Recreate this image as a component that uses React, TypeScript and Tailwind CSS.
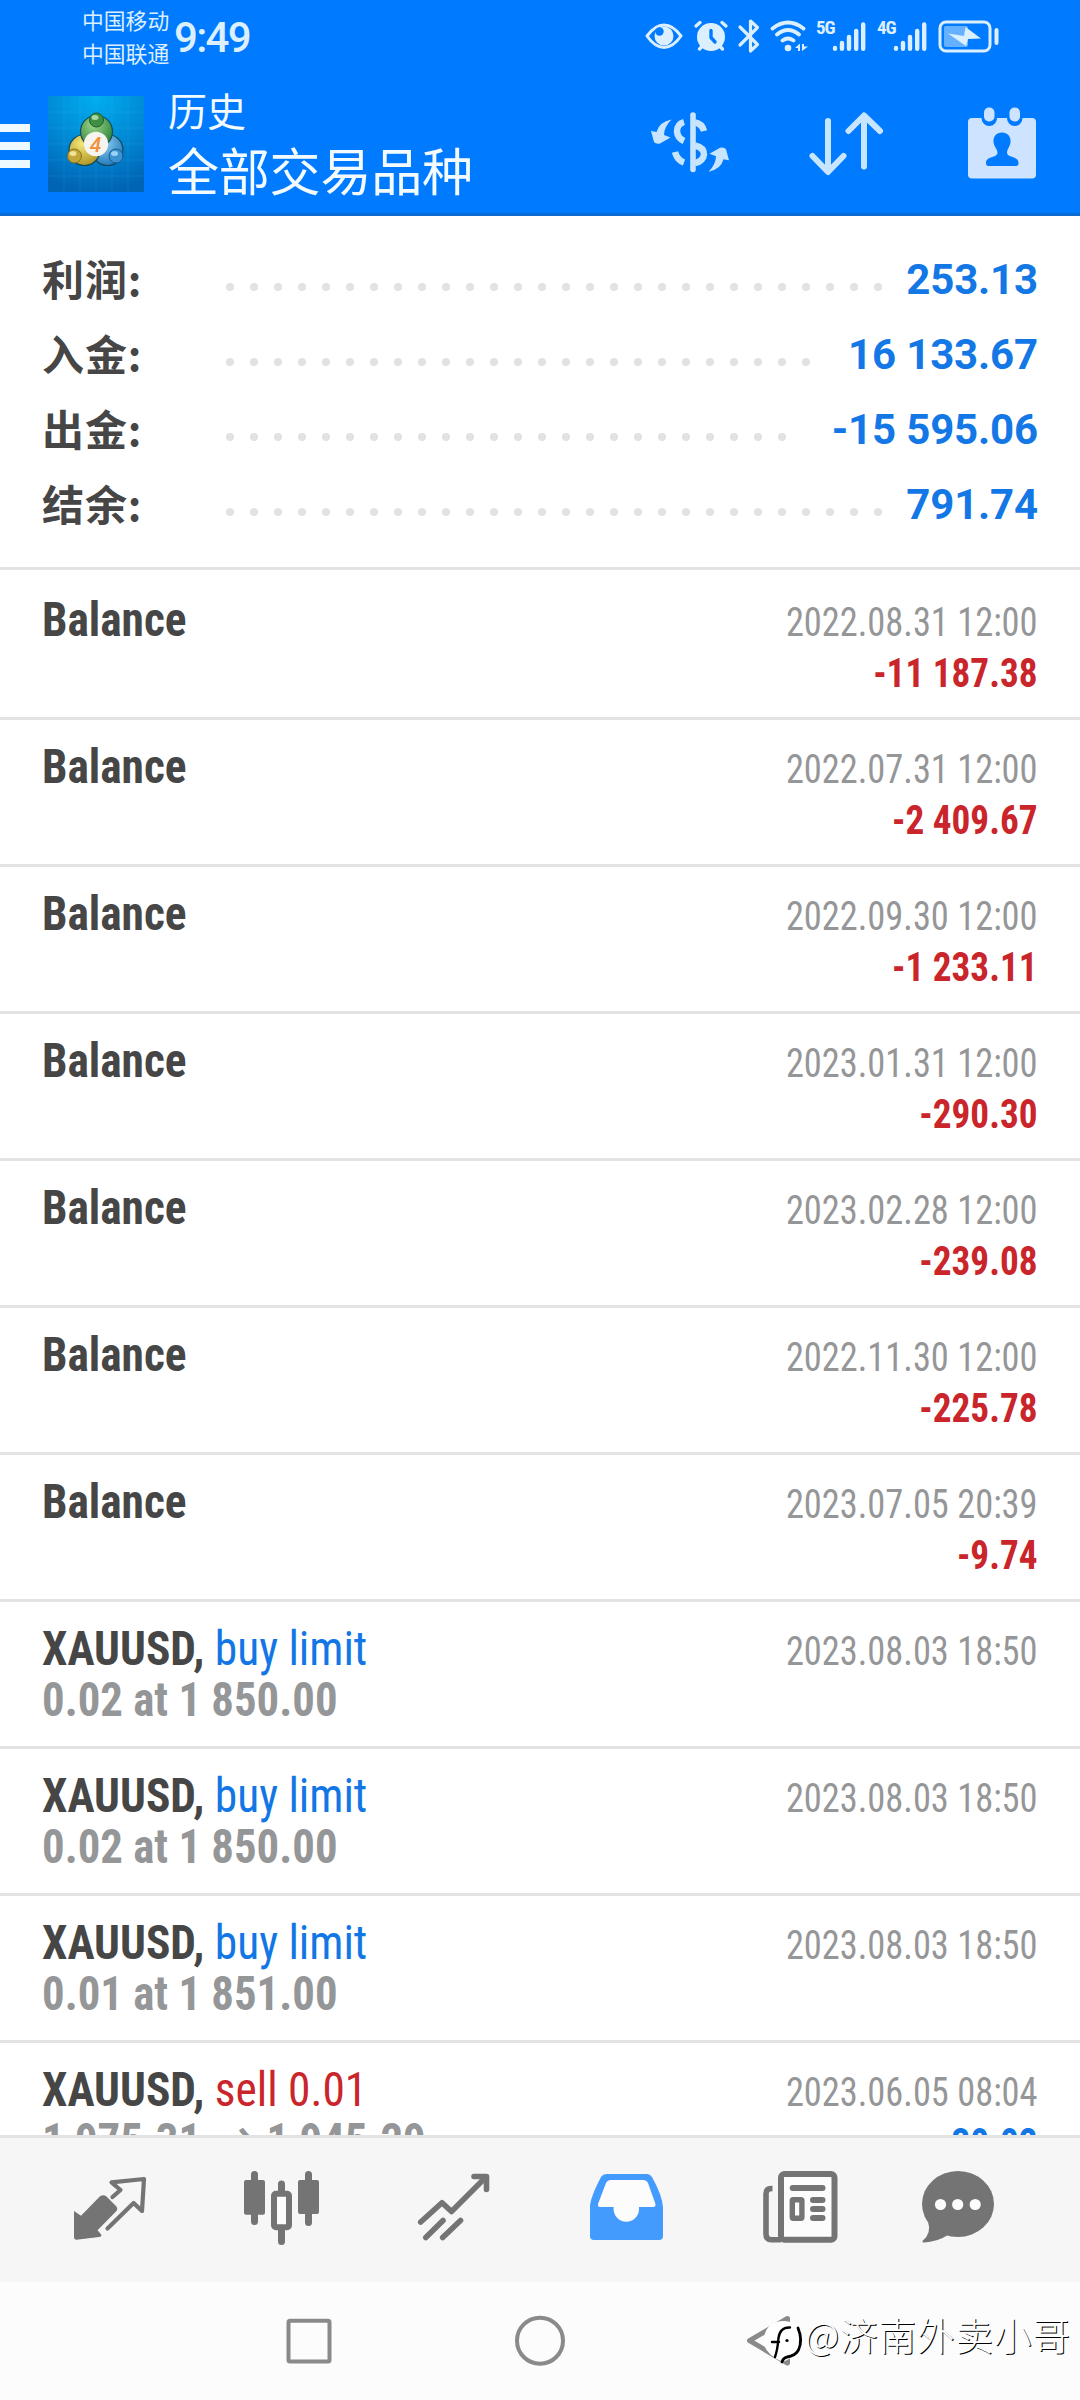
import type { ReactNode } from 'react';

type Row = {
  title: string;
  action?: string;
  detail?: string;
  date: string;
  amount?: string;
  tone?: 'red' | 'blue';
};

const summary = [
  { label: '利润:', value: '253.13', dots: 28 },
  { label: '入金:', value: '16 133.67', dots: 25 },
  { label: '出金:', value: '-15 595.06', dots: 24 },
  { label: '结余:', value: '791.74', dots: 28 },
];

const rows: Row[] = [
  { title: 'Balance', date: '2022.08.31 12:00', amount: '-11 187.38', tone: 'red' },
  { title: 'Balance', date: '2022.07.31 12:00', amount: '-2 409.67', tone: 'red' },
  { title: 'Balance', date: '2022.09.30 12:00', amount: '-1 233.11', tone: 'red' },
  { title: 'Balance', date: '2023.01.31 12:00', amount: '-290.30', tone: 'red' },
  { title: 'Balance', date: '2023.02.28 12:00', amount: '-239.08', tone: 'red' },
  { title: 'Balance', date: '2022.11.30 12:00', amount: '-225.78', tone: 'red' },
  { title: 'Balance', date: '2023.07.05 20:39', amount: '-9.74', tone: 'red' },
  { title: 'XAUUSD', action: 'buy limit', detail: '0.02 at 1 850.00', date: '2023.08.03 18:50', tone: 'blue' },
  { title: 'XAUUSD', action: 'buy limit', detail: '0.02 at 1 850.00', date: '2023.08.03 18:50', tone: 'blue' },
  { title: 'XAUUSD', action: 'buy limit', detail: '0.01 at 1 851.00', date: '2023.08.03 18:50', tone: 'blue' },
  { title: 'XAUUSD', action: 'sell 0.01', detail: '1 975.31 → 1 945.29', date: '2023.06.05 08:04', amount: '30.02', tone: 'blue' },
];

function Svg({ box, className, children }: { box: string; className: string; children: ReactNode }) {
  return (
    <svg viewBox={box} className={`shrink-0 ${className}`} fill="none" strokeLinecap="round" strokeLinejoin="round">
      {children}
    </svg>
  );
}

function SignalBars() {
  return (
    <g stroke="#dcefff" strokeWidth="4.4">
      <path d="M3 28.7V28M10 28.7V23M17 28.7V17M24.2 28.7V11M31.2 28.7V4.5" />
    </g>
  );
}

function StatusBar() {
  return (
    <div className="flex h-[72px] text-[#dcefff]">
      <div className="ml-[82px] flex w-[92px] flex-col pt-[3px] text-[21.8px] leading-[33px] whitespace-nowrap">
        <span>中国移动</span>
        <span>中国联通</span>
      </div>
      <span className="w-[78px] pt-[13px] font-['Roboto',sans-serif] text-[42px] leading-[50px] font-medium tracking-[-1.7px]">
        9:49
      </span>
      <div className="ml-[389px] flex pt-[16px]">
        {/* 护眼 */}
        <Svg box="641 16 46 40" className="h-10 w-[46px]">
          <path d="M647 36Q655 25 664 25Q673 25 681 36Q673 47.5 664 47.5Q655 47.5 647 36Z" stroke="currentColor" strokeWidth="3" />
          <circle cx="664" cy="36" r="9.5" fill="currentColor" />
          <circle cx="659.5" cy="31.5" r="4.2" fill="#007aff" />
        </Svg>
        {/* 闹钟 */}
        <Svg box="687 16 48 40" className="h-10 w-12">
          <circle cx="711" cy="37" r="14" fill="currentColor" />
          <path d="M696 26L700 22.5M726 26L722 22.5M699.5 49L702 46.5M722.5 49L720 46.5" stroke="currentColor" strokeWidth="3.4" />
          <path d="M711 30.5V37.5L715 42" stroke="#007aff" strokeWidth="3.4" />
        </Svg>
        {/* 蓝牙 */}
        <Svg box="735 16 30 40" className="h-10 w-[30px]">
          <path d="M740 27L757.5 44.5L750.5 51V21L757.5 27.5L740 45" stroke="currentColor" strokeWidth="3.2" />
        </Svg>
        {/* WiFi */}
        <Svg box="765 16 48 40" className="h-10 w-12">
          <path d="M772.5 28.5Q788 16.5 803.5 28.5M777 34.5Q788 25.5 799 34.5M782.5 40.5Q788 36.5 793.5 40.5" stroke="currentColor" strokeWidth="3.8" />
          <circle cx="788" cy="48" r="3.3" fill="currentColor" />
          <path d="M795 48L800 43.5V51H798V48ZM802 51V44H804V46.5H808Z" fill="currentColor" />
        </Svg>
        <div className="flex w-[61px]">
          <span className="mt-[3px] ml-[3px] w-[16px] font-['Roboto_Condensed','Roboto',sans-serif] text-[19px] leading-[18px] font-bold tracking-[-1px] font-stretch-condensed">5G</span>
          <Svg box="0 0 34 36" className="mt-[4px] h-9 w-[34px]">
            <SignalBars />
          </Svg>
        </div>
        <div className="flex w-[61px]">
          <span className="mt-[3px] ml-[3px] w-[16px] font-['Roboto_Condensed','Roboto',sans-serif] text-[19px] leading-[18px] font-bold tracking-[-1px] font-stretch-condensed">4G</span>
          <Svg box="0 0 34 36" className="mt-[4px] h-9 w-[34px]">
            <SignalBars />
          </Svg>
        </div>
        {/* 电池 */}
        <Svg box="935 16 68 40" className="h-10 w-[68px]">
          <rect x="940" y="22" width="50" height="29" rx="6" stroke="currentColor" strokeWidth="3" />
          <rect x="944" y="26" width="24" height="21" rx="2" fill="#66b1ff" />
          <path d="M948 33.5L964 36L965.5 27L981 38.5L968 39L966 46Z" fill="currentColor" />
          <path d="M996.5 30V43" stroke="currentColor" strokeWidth="4" />
        </Svg>
      </div>
    </div>
  );
}

function AppLogo() {
  return (
    <Svg box="48 96 96 96" className="ml-[18px] h-24 w-24">
      <defs>
        <radialGradient id="sky" cx="0.5" cy="0" r="1">
          <stop offset="0" stopColor="#00aef0" />
          <stop offset="0.55" stopColor="#0088d4" />
          <stop offset="1" stopColor="#0064b4" />
        </radialGradient>
        <radialGradient id="green" cx="0.4" cy="0.3" r="0.8">
          <stop offset="0" stopColor="#9bd488" />
          <stop offset="1" stopColor="#1f7a32" />
        </radialGradient>
        <radialGradient id="gold" cx="0.4" cy="0.3" r="0.8">
          <stop offset="0" stopColor="#f3e678" />
          <stop offset="1" stopColor="#a98c1c" />
        </radialGradient>
        <radialGradient id="azure" cx="0.4" cy="0.3" r="0.8">
          <stop offset="0" stopColor="#8ccdf2" />
          <stop offset="1" stopColor="#1670b4" />
        </radialGradient>
      </defs>
      <rect x="48" y="96" width="96" height="96" fill="url(#sky)" />
      <path
        d="M64 96V192M80 96V192M96 96V192M112 96V192M128 96V192M48 112H144M48 128H144M48 144H144M48 160H144M48 176H144"
        stroke="#5cc4f0"
        strokeOpacity="0.12"
      />
      <g stroke="#17495c" strokeWidth="1.2">
        <circle cx="107.5" cy="150" r="15.5" fill="url(#azure)" />
        <circle cx="84.5" cy="150" r="15.5" fill="url(#gold)" />
        <circle cx="96.5" cy="131.5" r="16" fill="url(#green)" />
      </g>
      <circle cx="96.5" cy="120" r="7" fill="#3f8f45" stroke="#1d5f2a" />
      <circle cx="74.5" cy="156" r="7" fill="#c3a63a" stroke="#8a7218" />
      <circle cx="116" cy="156" r="7" fill="#3c93d2" stroke="#155a94" />
      <ellipse cx="95" cy="117.5" rx="3.5" ry="2.5" fill="#a8d8a0" />
      <ellipse cx="73" cy="153.5" rx="3.5" ry="2.5" fill="#f0e296" />
      <ellipse cx="114.500" cy="153.5" rx="3.5" ry="2.5" fill="#9cd2f4" />
      <circle cx="96" cy="144" r="12.2" fill="#f6f4ee" />
      <text x="95.5" y="151.5" textAnchor="middle" fill="#f0913c" fontFamily="Roboto, sans-serif" fontSize="21" fontStyle="italic" fontWeight="500">
        4
      </text>
    </Svg>
  );
}

function Header() {
  return (
    <header className="h-[216px] border-b-[3px] border-[#0c6bd2] bg-[#007aff]">
      <StatusBar />
      <div className="flex pt-[24px]">
        <div className="mt-[28px] flex w-[30px] flex-col gap-[10px]">
          <span className="h-2 bg-[#eef8ff]" />
          <span className="h-2 bg-[#eef8ff]" />
          <span className="h-2 bg-[#eef8ff]" />
        </div>
        <AppLogo />
        <div className="ml-[24px] w-[482px] text-[#f4fbff]">
          <div className="mt-[-12px] text-[39px] leading-[50px]">历史</div>
          <div className="mt-[5px] text-[51px] leading-[60px] tracking-[-0.2px]">全部交易品种</div>
        </div>
        <Svg box="650 96 80 96" className="h-24 w-20">
          <g stroke="#c8e5ff" strokeWidth="6.5" strokeLinecap="butt">
            <path d="M684 122Q677 124 677 131.5Q677.5 138 684 141" />
            <path d="M695 122.5Q702 123.5 704 131" />
            <path d="M675 152Q677 160 684 162.5" />
            <path d="M695 145.5Q704 147.5 704 154.5Q703 161.5 695 163" />
            <path d="M693 115V169.5" strokeWidth="5.6" strokeLinecap="round" />
          </g>
          <g fill="#c8e5ff">
            <path d="M671.5 119.5Q659 122 656.5 132L651 131L654 142Q656 144.5 660 143.5L670.5 137.5L664 135Q664 127 671.5 119.5Z" />
            <path d="M671.5 119.5Q659 122 656.5 132L651 131L654 142Q656 144.5 660 143.5L670.5 137.5L664 135Q664 127 671.5 119.5Z" transform="rotate(180 690 145.6)" />
          </g>
        </Svg>
        <Svg box="808 96 76 96" className="ml-[78px] h-24 w-[76px]">
          <path d="M828 121V171.5M812.5 156L828 172L843.5 156M864 166.5V116M848.5 131L864 115.5L880 131" stroke="#c8e5ff" strokeWidth="6" />
        </Svg>
        <Svg box="968 96 68 96" className="ml-[84px] h-24 w-[68px]">
          <rect x="968" y="118" width="68" height="60.5" rx="4" fill="#cde3ff" />
          <rect x="986.5" y="109" width="5.5" height="12" rx="2.7" stroke="#007aff" strokeWidth="10" />
          <rect x="1012" y="109" width="5.5" height="12" rx="2.7" stroke="#007aff" strokeWidth="10" />
          <rect x="984" y="107.5" width="10.5" height="14" rx="5" fill="#cde3ff" />
          <rect x="1009.5" y="107.5" width="10.5" height="14" rx="5" fill="#cde3ff" />
          <path
            d="M1002 132.5C1008 132.5 1011 137 1010.5 142C1010 147 1007 149 1007 153C1008 158 1018.5 156 1018.5 163Q1018.5 166 1016 166H988.5Q986 166 986 163C986 156 997 158 997.5 153C997.5 149 994 147 993.5 142C993 137 996 132.5 1002 132.5Z"
            fill="#007aff"
          />
        </Svg>
      </div>
    </header>
  );
}

function Summary() {
  return (
    <section className="flex h-[354px] flex-col border-b-[3px] border-[#e3e3e3] pt-[26px]">
      {summary.map((item) => (
        <div key={item.label} className="flex h-[75px] items-center pr-[42px] pl-[42px]">
          <span className="w-[184px] pb-[4px] text-[42px] leading-[70px] font-bold tracking-[0.9px] text-[#464646]">{item.label}</span>
          <div className="flex flex-1 gap-4 pt-[15px]">
            {Array.from({ length: item.dots }, (_, i) => (
              <i key={i} className="size-2 shrink-0 rounded-full bg-[#e2e2e2]" />
            ))}
          </div>
          <span className="font-['Roboto',sans-serif] text-[42px] leading-[75px] font-bold tracking-[-0.15px] text-[#1477e6]">
            {item.value}
          </span>
        </div>
      ))}
    </section>
  );
}

function HistoryRow({ row }: { row: Row }) {
  const actionColor = row.action?.startsWith('sell') ? 'text-[#c9252b]' : 'text-[#1276e4]';
  return (
    <li className="flex h-[147px] shrink-0 justify-between border-b-[3px] border-[#e3e3e3] px-[42px] pt-[21px]">
      <div className="text-[48px] leading-[51px]">
        <div className="origin-left scale-x-[0.945] font-bold text-[#464646]">
          {row.title}
          {row.action && (
            <>
              , <span className={`font-normal ${actionColor}`}>{row.action}</span>
            </>
          )}
        </div>
        {row.detail && <div className="origin-left scale-x-[0.933] font-bold text-[#959698]">{row.detail}</div>}
      </div>
      <div className="pt-[3px] text-right text-[40px] leading-[51px]">
        <div className="origin-right scale-x-[0.91] text-[#959698]">{row.date}</div>
        {row.amount && (
          <div className={`origin-right scale-x-[0.93] font-bold ${row.tone === 'red' ? 'text-[#c9252b]' : 'text-[#1276e4]'}`}>
            {row.amount}
          </div>
        )}
      </div>
    </li>
  );
}

function TabBar() {
  return (
    <nav className="flex h-[147px] shrink-0 border-t-[3px] border-[#e3e3e3] bg-[#f6f6f6] pt-[32px] text-[#747474]">
      {/* 行情 */}
      <Svg box="72 2170 76 76" className="ml-[72px] size-[76px]">
        <path d="M112.5 2197L120.5 2190L111.5 2182.3L144 2179L142 2211L133.6 2203L107.5 2228.5" stroke="currentColor" strokeWidth="4.2" />
        <path d="M74 2211L81 2215.7L100 2196.3Q103.5 2194 106.5 2196.5L116 2206Q118.5 2209 116 2211.5L97.5 2230.3L101.2 2234.5Q102 2236.5 99 2237L76.5 2239.7Q74 2239.7 74 2237Z" fill="currentColor" />
      </Svg>
      {/* 图表 */}
      <Svg box="244 2170 76 76" className="ml-[96px] size-[76px]">
        <rect x="244" y="2180" width="21" height="34.7" rx="2" fill="currentColor" />
        <rect x="298" y="2180" width="21" height="34" rx="2" fill="currentColor" />
        <path d="M254.5 2174.5V2221.5M281.5 2184V2193M281.5 2230V2241.5M308.5 2174.5V2222.5" stroke="currentColor" strokeWidth="7" />
        <rect x="274" y="2193.7" width="15" height="33.6" rx="2" fill="#fcfcfc" stroke="currentColor" strokeWidth="6" />
      </Svg>
      {/* 交易 */}
      <Svg box="416 2170 76 76" className="ml-[96px] size-[76px]">
        <g stroke="currentColor" strokeWidth="5.6">
          <path d="M420.7 2222L442 2202.7L451.5 2211.5L484.5 2178.5" />
          <path d="M474 2176.5H486.5V2189.5" />
          <path d="M425.8 2237.5L443 2220.5M442.7 2237.5L460.5 2220.5" />
        </g>
      </Svg>
      {/* 历史 */}
      <Svg box="588 2170 76 76" className="ml-[96px] size-[76px]">
        <path d="M590 2207Q590 2198 601 2177Q603 2174 607 2174H647Q650 2174 652 2177Q662 2195 663 2207V2236Q663 2240 659 2240H594Q590 2240 590 2236Z" fill="#439bfd" />
        <path d="M611 2180H643Q646.5 2180 648 2183L655.5 2204Q656 2207 653 2207H639V2209A12.7 12.7 0 0 1 613.6 2209V2207H600Q597.5 2207 598 2204L606 2183Q607.5 2180 611 2180Z" fill="#fcfcfc" />
      </Svg>
      {/* 新闻 */}
      <Svg box="762 2170 76 76" className="ml-[98px] size-[76px]">
        <rect x="781" y="2174" width="53.5" height="65.7" rx="3.5" fill="#fcfcfc" stroke="currentColor" strokeWidth="6" />
        <path d="M772.5 2188.5H771.5Q766 2188.5 766 2194V2234Q766 2239.7 771.5 2239.7H781" stroke="currentColor" strokeWidth="5.6" strokeLinecap="butt" />
        <path d="M792.7 2188H822.5M813 2200H822.5M813 2209H822.5M813 2218H822.5" stroke="currentColor" strokeWidth="6" />
        <rect x="792.3" y="2199.7" width="9.6" height="18.6" rx="1" stroke="currentColor" strokeWidth="5.4" />
      </Svg>
      {/* 消息 */}
      <Svg box="920 2170 76 76" className="ml-[82px] size-[76px]">
        <ellipse cx="958" cy="2204" rx="36" ry="33" fill="currentColor" />
        <path d="M928 2222Q932 2233 922.5 2241Q922 2242.5 924 2242.5Q937 2242 948 2235Z" fill="currentColor" />
        <g fill="#fcfcfc">
          <circle cx="940.5" cy="2204.5" r="5.6" />
          <circle cx="957.7" cy="2204.5" r="5.6" />
          <circle cx="975.2" cy="2204.5" r="5.6" />
        </g>
      </Svg>
    </nav>
  );
}

function SystemNav() {
  return (
    <div className="flex h-[118px] shrink-0 items-center bg-[#fcfcfc] text-[#8a8a8a]">
      <Svg box="284 2316 50 50" className="ml-[284px] size-[50px]">
        <rect x="288.5" y="2320.7" width="41" height="40.8" rx="1.5" stroke="currentColor" strokeWidth="4" />
      </Svg>
      <Svg box="514 2315 52 52" className="ml-[180px] size-[52px]">
        <circle cx="540" cy="2340.7" r="23" stroke="currentColor" strokeWidth="4" />
      </Svg>
      <Svg box="745 2313 60 56" className="ml-[179px] h-14 w-[60px]">
        <path d="M787.5 2318.5L749.5 2340.7L787.5 2363Z" stroke="currentColor" strokeWidth="5" />
        <path d="M764 2337Q767 2321 784 2321Q802 2322 802 2340Q801 2354 783 2362Q768 2356 764 2345Z" fill="#fff" />
        <path d="M790 2327.5Q780 2327 778.5 2338Q777.5 2350 775 2357M772 2342H779" stroke="#000" strokeWidth="2.4" />
        <path d="M798 2328Q803 2340 798.5 2350Q795 2356 787 2357Q783 2358 782 2362" stroke="#000" strokeWidth="2.8" />
        <circle cx="787" cy="2340.5" r="1.6" fill="#000" />
      </Svg>
      <span className="pb-[15px] text-[37.5px] leading-[50px] font-light tracking-[1px] whitespace-nowrap text-white [text-shadow:1px_1px_0_#000]">
        @济南外卖小哥
      </span>
    </div>
  );
}

export default function App() {
  return (
    <div className="flex h-[2400px] w-[1080px] flex-col overflow-hidden bg-white font-['Noto_Sans_CJK_SC',sans-serif]">
      <Header />
      <Summary />
      <ul className="flex flex-1 flex-col overflow-hidden pt-[3px] font-['Roboto_Condensed','Roboto','Noto_Sans_CJK_SC',sans-serif] font-stretch-condensed">
        {rows.map((row, i) => (
          <HistoryRow key={i} row={row} />
        ))}
      </ul>
      <TabBar />
      <SystemNav />
    </div>
  );
}
